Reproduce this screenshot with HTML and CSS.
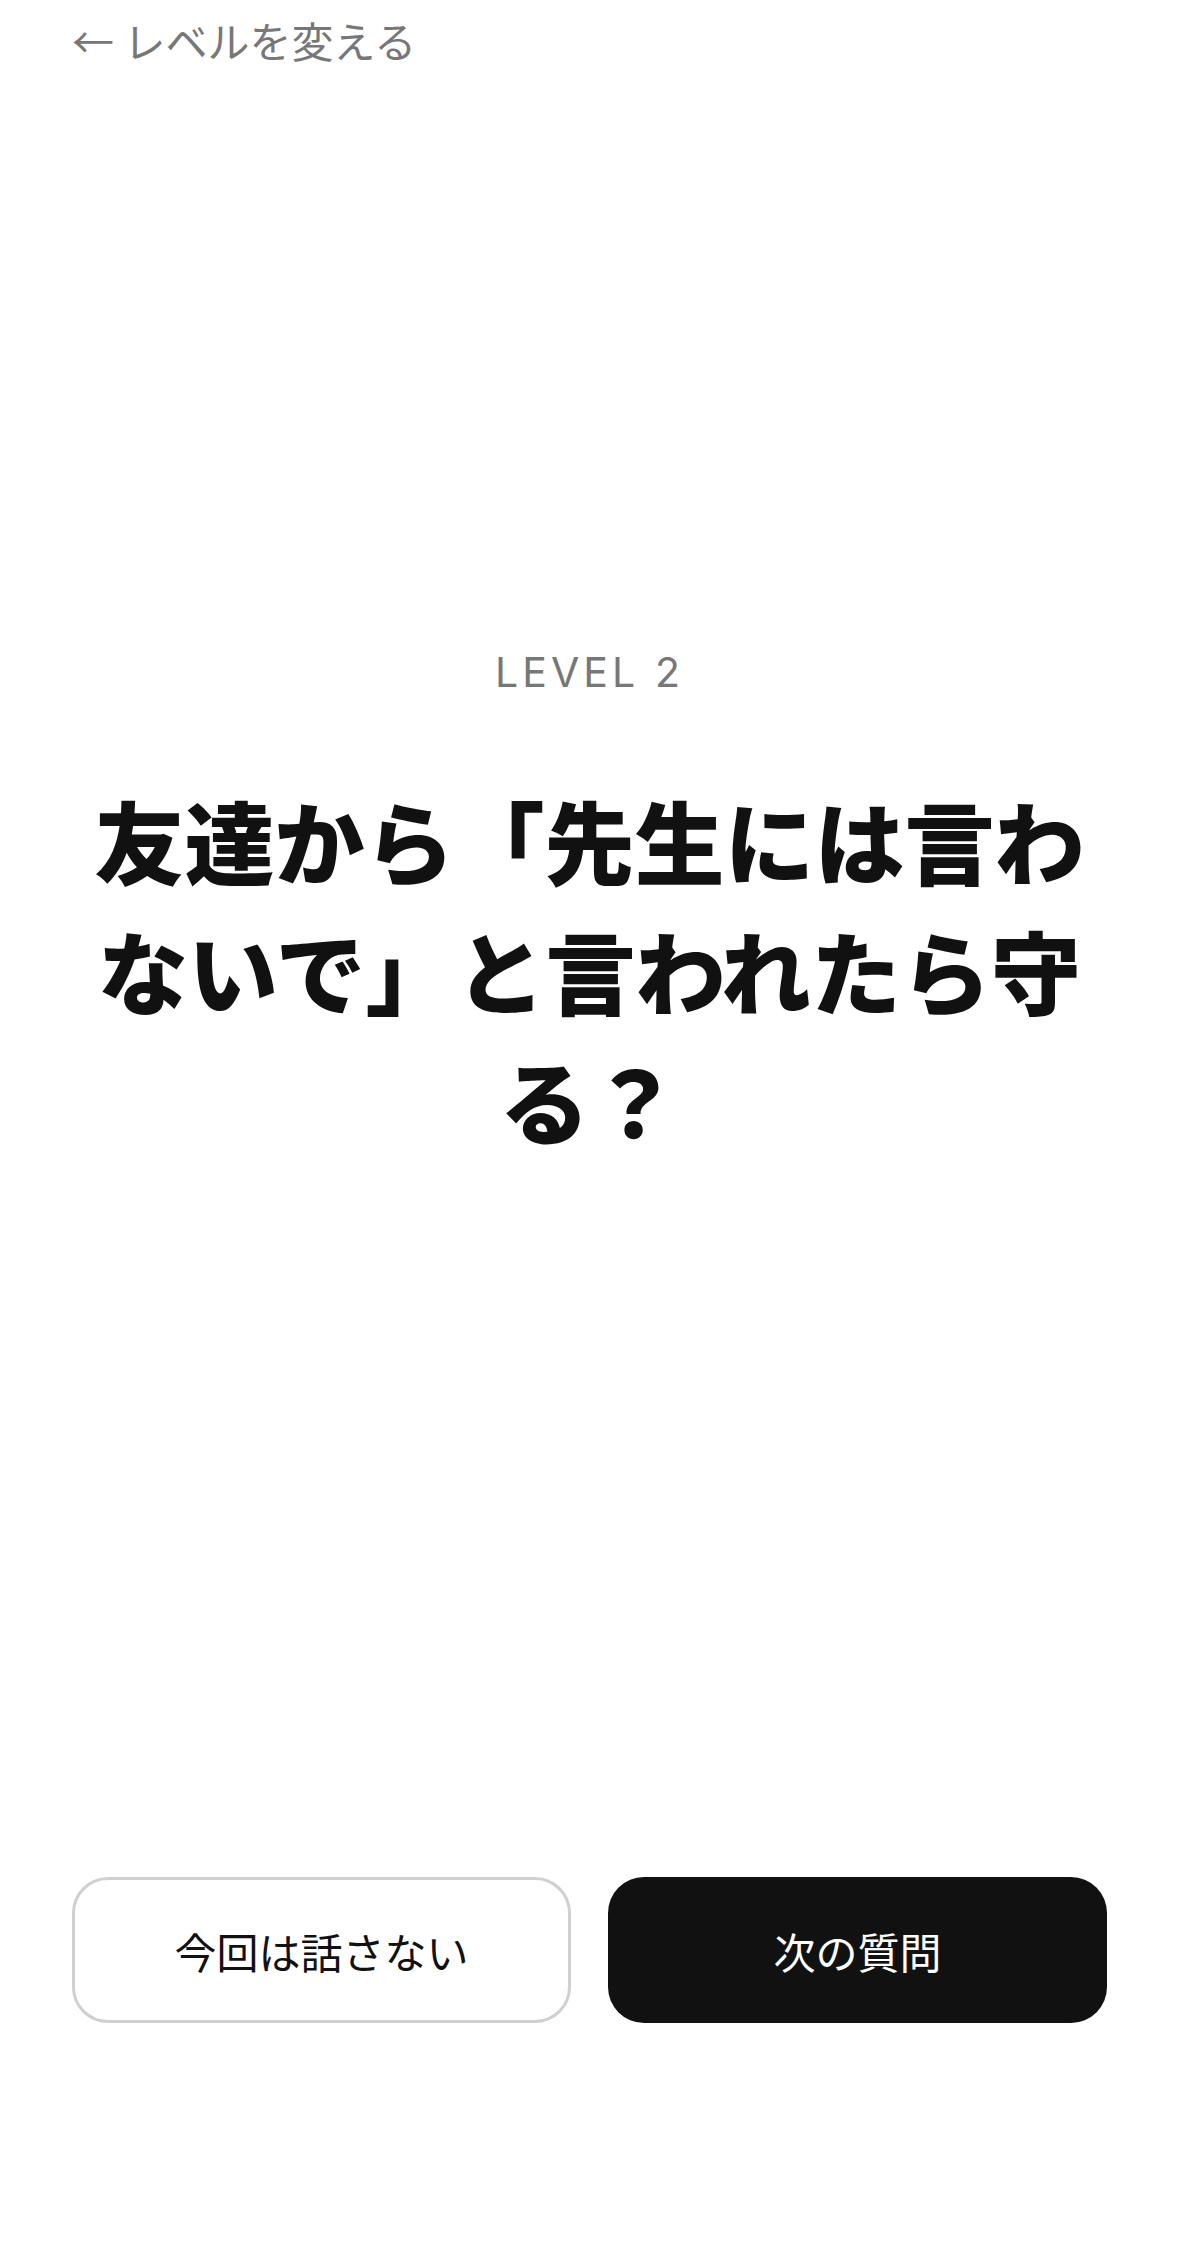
FILE: index.html
```html
<!DOCTYPE html>
<html lang="ja">

<head>
    <meta charset="utf-8">
    <title>質問カード</title>
    <link rel="stylesheet" href="styles.css">
</head>

<body>
    <div class="page">
        <a class="back-link" href="#">← レベルを変える</a>

        <div class="card">
            <div class="level-label">LEVEL 2</div>
            <h1 class="question">友達から「先生には言わないで」と言われたら守る？</h1>
        </div>

        <div class="actions">
            <button class="action-button skip">今回は話さない</button>
            <button class="action-button next">次の質問</button>
        </div>
    </div>
</body>

</html>
```

FILE: styles.css
```css
body {
    margin: 0;
    background-color: #ffffff;
    font-family: "Noto Sans CJK JP", "Noto Sans", sans-serif;
    color: #111111;
}

.page {
    display: flex;
    flex-direction: column;
    min-height: 2250px;
    padding: 0 72px 227px 72px;
    box-sizing: border-box;
}

.back-link {
    align-self: flex-start;
    margin-top: 14px;
    font-size: 42px;
    line-height: 52px;
    color: #777777;
    text-decoration: none;
}

.card {
    display: flex;
    flex-direction: column;
    align-items: center;
    margin-top: 581px;
}

.level-label {
    font-family: "Inter", "Noto Sans", sans-serif;
    font-size: 41px;
    line-height: 50px;
    letter-spacing: 0.1em;
    color: #777777;
}

.question {
    margin: 77px 0 0 0;
    font-size: 90px;
    line-height: 130px;
    font-weight: 900;
    text-align: center;
    color: #111111;
}

.actions {
    display: grid;
    grid-template-columns: 1fr 1fr;
    gap: 37px;
    margin-top: auto;
}

.action-button {
    height: 146px;
    border-radius: 36px;
    font-family: "Noto Sans CJK JP", sans-serif;
    font-size: 42px;
    cursor: pointer;
}

.skip {
    background-color: #ffffff;
    color: #111111;
    border: 3px solid #d0d0d0;
}

.next {
    background-color: #111111;
    color: #ffffff;
    border: none;
}
```
